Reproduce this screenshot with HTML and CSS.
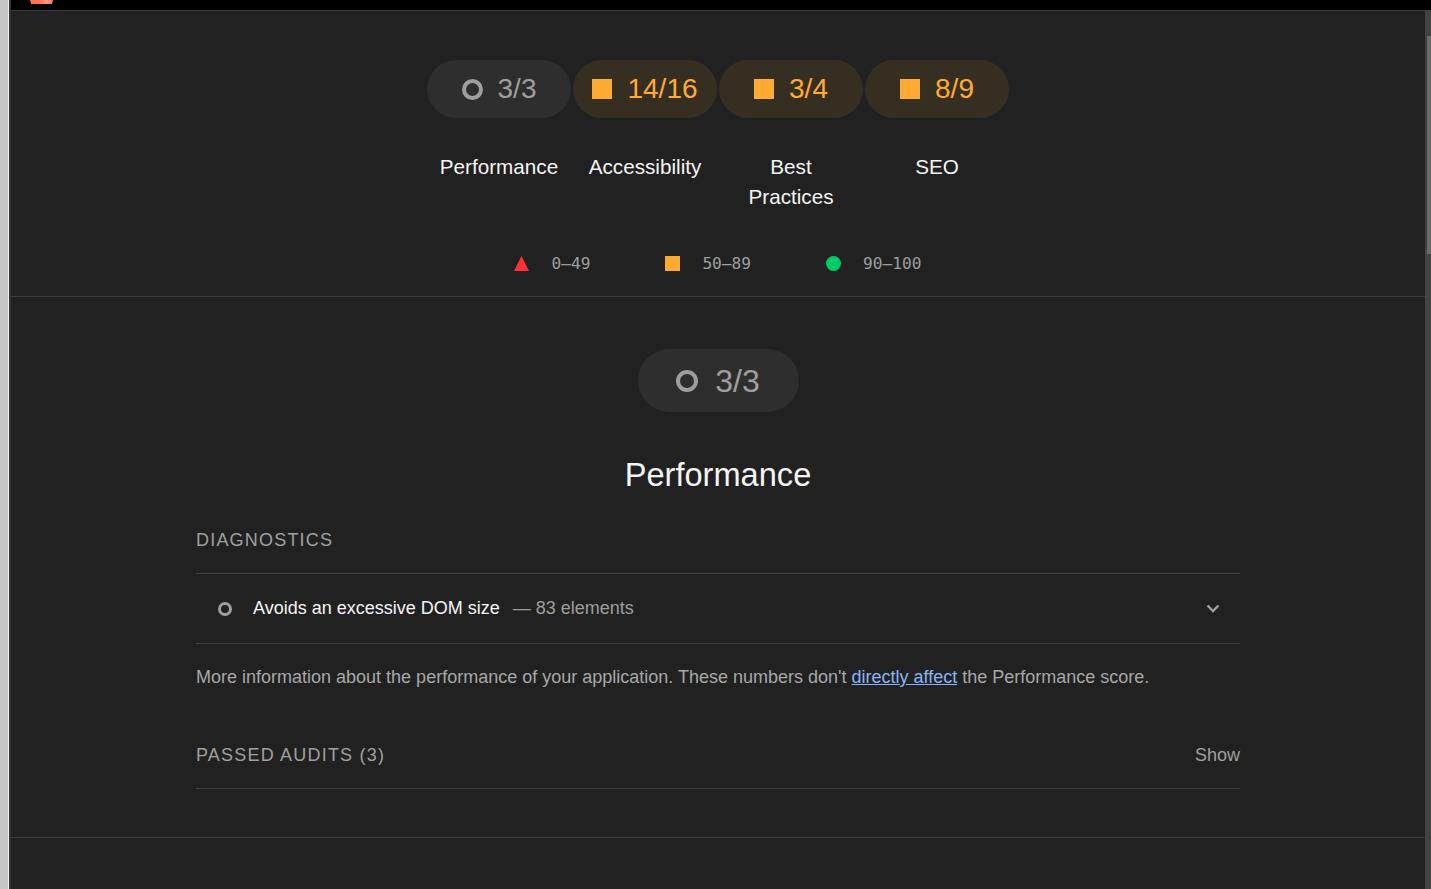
FILE: index.html
```html
<!DOCTYPE html>
<html lang="en">
<head>
<meta charset="utf-8">
<title>Lighthouse Report</title>
<link rel="stylesheet" href="styles.css">
</head>
<body>
<div class="app">
  <div class="edge"></div>
  <div class="window">
    <div class="topbar"><div class="logo"></div></div>
    <div class="viewport">
      <main class="report">
        <section class="scores">
          <div class="gauges">
            <div class="gauge">
              <div class="pill pill--na"><span class="ico-ring"></span><span class="pill__num">3/3</span></div>
              <div class="gauge__label">Performance</div>
            </div>
            <div class="gauge">
              <div class="pill pill--avg"><span class="ico-square"></span><span class="pill__num">14/16</span></div>
              <div class="gauge__label">Accessibility</div>
            </div>
            <div class="gauge">
              <div class="pill pill--avg"><span class="ico-square"></span><span class="pill__num">3/4</span></div>
              <div class="gauge__label">Best Practices</div>
            </div>
            <div class="gauge">
              <div class="pill pill--avg"><span class="ico-square"></span><span class="pill__num">8/9</span></div>
              <div class="gauge__label">SEO</div>
            </div>
          </div>
          <div class="legend">
            <div class="legend__item">
              <svg class="legend__icon" viewBox="0 0 15 15" width="15" height="15"><polygon points="7.5,0 15,15 0,15" fill="#ff3333"/></svg>
              <span>0–49</span>
            </div>
            <div class="legend__item">
              <span class="legend__square"></span>
              <span>50–89</span>
            </div>
            <div class="legend__item">
              <span class="legend__dot"></span>
              <span>90–100</span>
            </div>
          </div>
        </section>

        <section class="category">
          <div class="cat-head">
            <div class="cat-pill"><span class="ico-ring ico-ring--lg"></span><span class="cat-pill__num">3/3</span></div>
            <h2 class="cat-title">Performance</h2>
          </div>
          <div class="column">
            <div class="group-title">DIAGNOSTICS</div>
            <div class="audit">
              <span class="ico-ring ico-ring--sm"></span>
              <span class="audit__title">Avoids an excessive DOM size</span>
              <span class="audit__value">— 83 elements</span>
              <svg class="audit__chevron" viewBox="0 0 14 9" width="14" height="9"><polyline points="1.5,1.5 7,7 12.5,1.5" fill="none" stroke="#a0a0a0" stroke-width="2.4"/></svg>
            </div>
            <p class="desc">More information about the performance of your application. These numbers don't <a class="desc__link" href="#">directly affect</a> the Performance score.</p>
            <div class="passed">
              <span class="group-title group-title--inline">PASSED AUDITS (3)</span>
              <span class="passed__show">Show</span>
            </div>
          </div>
        </section>
      </main>
      <div class="scrollbar"><div class="scrollbar__thumb"></div></div>
    </div>
  </div>
</div>
</body>
</html>
```

FILE: styles.css
```css
* { box-sizing: border-box; }

html, body {
  margin: 0;
  padding: 0;
  height: 889px;
  overflow: hidden;
  background: #212121;
  font-family: "Liberation Sans", Arial, sans-serif;
}

.app {
  display: flex;
  height: 889px;
}

.edge {
  width: 9px;
  flex: 0 0 9px;
  background: #c6c6c6;
  border-right: 1px solid #efefef;
}

.window {
  flex: 1;
  display: flex;
  flex-direction: column;
  border-left: 2px solid #353535;
  min-width: 0;
}

.topbar {
  height: 11px;
  flex: 0 0 11px;
  background: #000;
  border-bottom: 1px solid #3c3c3c;
  padding-left: 19px;
}

.logo {
  width: 23px;
  height: 4px;
  background: linear-gradient(100deg, #ff6d4d 0%, #ff7a58 55%, #ffa084 70%, #ff7555 100%);
  clip-path: polygon(0 0, 100% 0, 95% 100%, 5% 100%);
}

.viewport {
  flex: 1;
  display: flex;
  min-height: 0;
}

.report {
  flex: 1;
  min-width: 0;
  background: #212121;
}

.scrollbar {
  width: 6px;
  flex: 0 0 6px;
  background: #424242;
  padding-left: 2px;
  padding-top: 25px;
}

.scrollbar__thumb {
  width: 4px;
  height: 218px;
  background: #6a6a6a;
}

/* ---------- score header ---------- */
.scores {
  padding-top: 49px;
  padding-bottom: 23px;
  border-bottom: 1px solid #3d3d3d;
}

.gauges {
  display: flex;
  justify-content: center;
  gap: 2px;
}

.gauge {
  width: 144px;
  display: flex;
  flex-direction: column;
  align-items: center;
}

.pill {
  width: 144px;
  height: 58px;
  border-radius: 29px;
  display: flex;
  align-items: center;
  justify-content: center;
  gap: 15px;
  font-size: 28px;
}

.pill--na { background: #2e2e2e; color: #9e9e9e; }
.pill--avg { background: #372e22; color: #ffaa33; }

.pill__num { line-height: 1; }

.ico-ring {
  width: 21px;
  height: 21px;
  border: 4px solid #9e9e9e;
  border-radius: 50%;
  flex: 0 0 auto;
}

.ico-ring--lg {
  width: 22px;
  height: 22px;
  border-width: 4px;
}

.ico-ring--sm {
  width: 14px;
  height: 14px;
  border-width: 3px;
}

.ico-square {
  width: 20px;
  height: 20px;
  background: #ffaa33;
  flex: 0 0 auto;
}

.gauge__label {
  width: 126px;
  margin-top: 34px;
  text-align: center;
  font-size: 20.7px;
  line-height: 30px;
  color: #f5f5f5;
}

.legend {
  display: flex;
  justify-content: center;
  gap: 75px;
  margin-top: 41px;
  height: 20px;
}

.legend__item {
  display: flex;
  align-items: center;
  gap: 22px;
  font-family: "DejaVu Sans Mono", "Liberation Mono", monospace;
  font-size: 16.2px;
  color: #9e9e9e;
}

.legend__icon { display: block; }

.legend__square {
  width: 15px;
  height: 15px;
  background: #ffaa33;
}

.legend__dot {
  width: 15px;
  height: 15px;
  border-radius: 50%;
  background: #00cc66;
}

/* ---------- category ---------- */
.category {
  padding-top: 52px;
  padding-bottom: 48px;
  border-bottom: 1px solid #3d3d3d;
}

.cat-head {
  display: flex;
  flex-direction: column;
  align-items: center;
}

.cat-pill {
  width: 161px;
  height: 63px;
  border-radius: 32px;
  background: #2e2e2e;
  color: #9e9e9e;
  display: flex;
  align-items: center;
  justify-content: center;
  gap: 17px;
  font-size: 32px;
}

.cat-pill__num { line-height: 1; }

.cat-title {
  margin: 43px 0 0;
  font-size: 32.6px;
  line-height: 40px;
  font-weight: normal;
  color: #f5f5f5;
}

.column {
  width: 1044px;
  margin: 0 auto;
}

.group-title {
  margin-top: 33px;
  padding-bottom: 21px;
  font-size: 18px;
  line-height: 24px;
  letter-spacing: 1.2px;
  color: #a0a0a0;
}

.group-title--inline {
  margin: 0;
  padding: 0;
}

.audit {
  display: flex;
  align-items: center;
  height: 71px;
  padding-left: 22px;
  padding-right: 20px;
  border-top: 1px solid #424242;
  border-bottom: 1px solid #424242;
  font-size: 18px;
}

.audit__title {
  margin-left: 21px;
  color: #f5f5f5;
}

.audit__value {
  margin-left: 13px;
  color: #9e9e9e;
}

.audit__chevron {
  margin-left: auto;
  display: block;
}

.desc {
  margin: 21px 0 0;
  font-size: 18px;
  line-height: 24px;
  color: #a8a8a8;
}

.desc__link {
  color: #8ab4f8;
  text-decoration: underline;
}

.passed {
  display: flex;
  justify-content: space-between;
  align-items: center;
  margin-top: 54px;
  padding-bottom: 21px;
  border-bottom: 1px solid #424242;
  line-height: 24px;
}

.passed__show {
  font-size: 18px;
  color: #a0a0a0;
}
```
